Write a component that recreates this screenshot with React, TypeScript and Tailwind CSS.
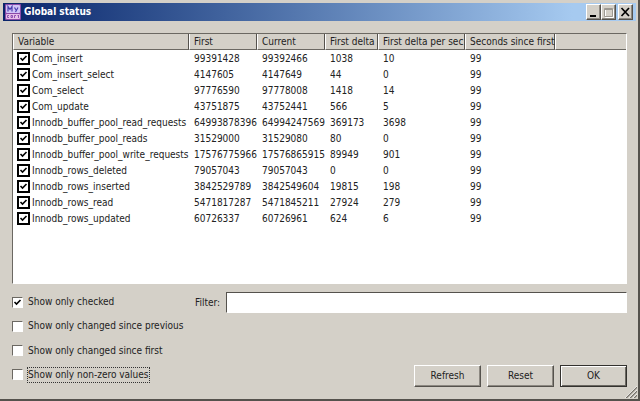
import { useState } from "react";

type StatusRow = [string, string, string, string, string, string];

const columns = [
  { label: "Variable", width: "w-[176px]" },
  { label: "First", width: "w-[68px]" },
  { label: "Current", width: "w-[68px]" },
  { label: "First delta", width: "w-[53px]" },
  { label: "First delta per sec", width: "w-[87px]" },
  { label: "Seconds since first", width: "w-[90px]" },
];

const rows: StatusRow[] = [
  ["Com_insert", "99391428", "99392466", "1038", "10", "99"],
  ["Com_insert_select", "4147605", "4147649", "44", "0", "99"],
  ["Com_select", "97776590", "97778008", "1418", "14", "99"],
  ["Com_update", "43751875", "43752441", "566", "5", "99"],
  ["Innodb_buffer_pool_read_requests", "64993878396", "64994247569", "369173", "3698", "99"],
  ["Innodb_buffer_pool_reads", "31529000", "31529080", "80", "0", "99"],
  ["Innodb_buffer_pool_write_requests", "17576775966", "17576865915", "89949", "901", "99"],
  ["Innodb_rows_deleted", "79057043", "79057043", "0", "0", "99"],
  ["Innodb_rows_inserted", "3842529789", "3842549604", "19815", "198", "99"],
  ["Innodb_rows_read", "5471817287", "5471845211", "27924", "279", "99"],
  ["Innodb_rows_updated", "60726337", "60726961", "624", "6", "99"],
];

const options = [
  { id: "checked", label: "Show only checked" },
  { id: "since-previous", label: "Show only changed since previous" },
  { id: "since-first", label: "Show only changed since first" },
  { id: "non-zero", label: "Show only non-zero values" },
];

const raised =
  "bg-[#d4d0c8] border border-t-white border-l-white border-r-[#55524d] border-b-[#55524d] shadow-[inset_-1px_-1px_0_#8d8982]";

function Tick() {
  return (
    <svg
      viewBox="0 0 9 9"
      className="pointer-events-none absolute inset-0 m-auto hidden size-[9px] peer-checked:block"
      aria-hidden="true"
    >
      <path d="M1.500 4l2 2 4-4" fill="none" stroke="#000" strokeWidth="1.600" />
    </svg>
  );
}

function AppIcon() {
  return (
    <svg viewBox="0 0 16 16" className="size-4" aria-hidden="true">
      <rect width="16" height="16" rx="1" fill="#8a4aa8" />
      <rect x="1" y="1" width="14" height="8" rx="1" fill="#cfc4f6" />
      <path d="M3 7.500V2.500l2 3 2-3v5" fill="none" stroke="#4a3fb0" strokeWidth="1.200" />
      <path d="M9.500 3.500l1.500 2.500M13 3.500l-2.500 4.500" fill="none" stroke="#4a3fb0" strokeWidth="1.200" />
      <rect x="1" y="10" width="14" height="5" rx="1" fill="#e6bfe8" />
      <path d="M4 11.500H2.500v2H4M6 11.500v2h1.500v-2zM9.500 14v-2.500H11M12.500 11.500h1.500M13.500 11.500V14" fill="none" stroke="#7a3aa6" strokeWidth=".8" />
    </svg>
  );
}

function TitleBar() {
  return (
    <header className="flex h-[18px] items-center gap-[3px] bg-linear-to-r from-[#0a246a] to-[#a6caf0] to-90% pr-[3px] pl-[2px]">
      <AppIcon />
      <h1 className="grow text-[10px] font-bold text-white">Global status</h1>
      <div className="flex">
        <button aria-label="Minimize" className={`h-4 w-[15px] ${raised}`}>
          <svg viewBox="0 0 13 14" className="block size-full">
            <path d="M3 10h6v2H3z" />
          </svg>
        </button>
        <button aria-label="Maximize" disabled className={`h-4 w-[15px] ${raised}`}>
          <svg viewBox="0 0 13 14" className="block size-full" fill="none">
            <path d="M3.500 4.500h8v8h-8z" stroke="#fff" />
            <path d="M2.500 3.500h8v8h-8zM3 4.500h7" stroke="#9d9992" />
          </svg>
        </button>
        <button aria-label="Close" className={`ml-[2px] h-4 w-[15px] ${raised}`}>
          <svg viewBox="0 0 13 14" className="block size-full">
            <path d="M2.500 3l7.500 8M10 3l-7.500 8" stroke="#000" strokeWidth="1.700" />
          </svg>
        </button>
      </div>
    </header>
  );
}

function StatusTable() {
  return (
    <div className="h-[251px] overflow-hidden border border-t-[#6b6862] border-l-[#6b6862] border-r-white border-b-white bg-white">
      <table className="w-full table-fixed border-separate border-spacing-0 text-left">
        <thead>
          <tr className="h-4 bg-[#d4d0c8]">
            {columns.map((col) => (
              <th
                key={col.label}
                className={`${col.width} border-b border-r border-l border-b-[#6b6862] border-r-[#55524d] border-l-white p-0 pl-1 font-normal whitespace-nowrap`}
              >
                {col.label}
              </th>
            ))}
            <td className="border-b border-l border-b-[#6b6862] border-l-white p-0" />
          </tr>
        </thead>
        <tbody>
          {rows.map(([name, ...values]) => (
            <tr key={name} className="h-4">
              <td className="p-0 pt-px pl-1">
                <label className="flex items-center gap-[2px] whitespace-nowrap">
                  <span className="relative size-[13px] shrink-0">
                    <input
                      type="checkbox"
                      defaultChecked
                      className="peer block size-[13px] appearance-none border-2 border-black bg-white"
                    />
                    <Tick />
                  </span>
                  {name}
                </label>
              </td>
              {values.map((value, i) => (
                <td key={i} className="p-0 pt-px pl-[5px]">
                  {value}
                </td>
              ))}
              <td />
            </tr>
          ))}
        </tbody>
      </table>
    </div>
  );
}

export default function App() {
  const [filter, setFilter] = useState("");

  return (
    <div className="flex min-h-screen flex-col border-r-2 border-b-2 border-[#55524d] bg-[#d4d0c8] pt-[3px] pr-[2px] pb-3 pl-[3px] font-['DejaVu_Sans_Condensed','DejaVu_Sans',sans-serif] text-[10px] leading-[14px] text-[#222]">
      <TitleBar />
      <main className="flex grow flex-col gap-2 px-[9px] pt-3">
        <StatusTable />
        <div className="flex grow gap-4">
          <div className="flex w-[167px] shrink-0 flex-col justify-between pt-[2px] pb-1">
            {options.map((option, i) => (
              <label key={option.id} className="flex items-center gap-1 whitespace-nowrap">
                <span className="relative size-[11px] shrink-0">
                  <input
                    type="checkbox"
                    defaultChecked={i === 0}
                    className="peer block size-[11px] appearance-none border border-t-[#6b6862] border-l-[#6b6862] border-r-white border-b-white bg-white"
                  />
                  <Tick />
                </span>
                <span
                  className={`border border-dotted ${i === 3 ? "border-[#333]" : "border-transparent"}`}
                >
                  {option.label}
                </span>
              </label>
            ))}
          </div>
          <div className="flex grow flex-col justify-between">
            <div className="flex items-center gap-[6px]">
              <label htmlFor="filter">Filter:</label>
              <input
                id="filter"
                value={filter}
                onChange={(e) => setFilter(e.target.value)}
                className="h-[21px] min-w-0 grow border border-t-[#55524d] border-l-[#55524d] border-r-white border-b-white bg-white px-1 outline-none"
              />
            </div>
            <div className="flex justify-end gap-[6px]">
              <button className={`h-[22px] w-[67px] ${raised}`}>Refresh</button>
              <button className={`h-[22px] w-[67px] ${raised}`}>Reset</button>
              <button className="h-[22px] w-[67px] border border-[#33312e] bg-[#d4d0c8] shadow-[inset_1px_1px_0_#fff,inset_-1px_-1px_0_#6b6862]">
                OK
              </button>
            </div>
          </div>
        </div>
      </main>
      <svg viewBox="0 0 12 12" className="absolute right-[3px] bottom-[3px] size-3" aria-hidden="true">
        <path d="M1 12L12 1M5 12l7-7M9 12l3-3" stroke="#77736c" strokeWidth="1.500" />
        <path d="M0 12L12 0M4 12l8-8M8 12l4-4" stroke="#fff" strokeWidth=".7" />
      </svg>
    </div>
  );
}
